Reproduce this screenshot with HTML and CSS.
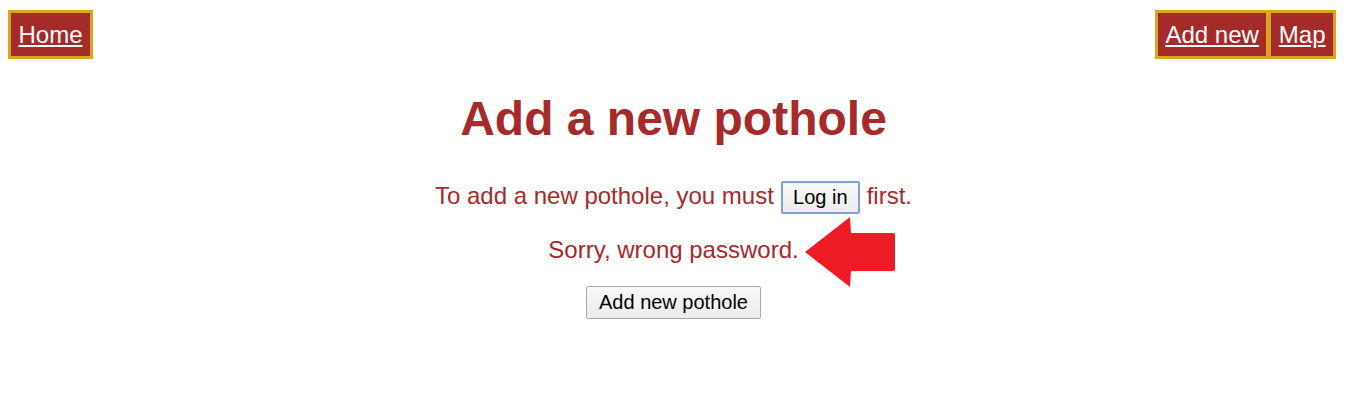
FILE: index.html
```html
<!DOCTYPE html>
<html lang="en">
<head>
<meta charset="utf-8">
<title>Add a new pothole</title>
<link rel="stylesheet" href="styles.css">
</head>
<body>
<nav class="nav">
  <div class="nav-group">
    <a class="nav-link" href="#">Home</a>
  </div>
  <div class="nav-group nav-right">
    <a class="nav-link" href="#">Add new</a>
    <a class="nav-link" href="#">Map</a>
  </div>
</nav>
<main class="content">
  <h1 class="title">Add a new pothole</h1>
  <p class="line">To add a new pothole, you must <button class="btn btn-focus" type="button">Log in</button> first.</p>
  <p class="line"><span class="msg">Sorry, wrong password.<svg class="arrow" width="90" height="70" viewBox="0 0 90 70" aria-hidden="true"><path d="M0 35 L45 0 L46 16 L88 16 Q90 16 90 18 L90 52 Q90 54 88 54 L46 54 L45 70 Z" fill="#ed1c24"/></svg></span></p>
  <div class="actions"><button class="btn" type="button">Add new pothole</button></div>
</main>
</body>
</html>
```
FILE: styles.css
```css
html, body {
  background: #ffffff;
}
body {
  margin: 8px;
  font-family: "Liberation Sans", Arial, sans-serif;
  color: #a52a2a;
}
.nav {
  display: flex;
  justify-content: space-between;
  align-items: flex-start;
  margin-top: 2px;
  margin-right: 3px;
}
.nav-group {
  display: flex;
}
.nav-link {
  display: block;
  background: #a52a2a;
  border: 3px solid #daa520;
  color: #ffffff;
  font-size: 24px;
  line-height: 27px;
  padding: 8px 7.5px;
}
.nav-right .nav-link + .nav-link {
  border-left-width: 2px;
}
.content {
  text-align: center;
}
.title {
  font-size: 48px;
  font-weight: bold;
  margin: 32px 0 32px 0;
  line-height: 55px;
}
.line {
  font-size: 24px;
  margin: 0 0 18px 0;
  line-height: 36px;
}
.msg {
  position: relative;
}
.arrow {
  position: absolute;
  left: calc(100% + 6px);
  top: -19px;
}
.btn {
  font-family: "Liberation Sans", Arial, sans-serif;
  font-size: 20px;
  color: #000000;
  background: linear-gradient(#f8f8f8, #ececec);
  border: 1px solid #a9a9a9;
  border-radius: 2px;
  padding: 4px 12px;
  vertical-align: middle;
}
.btn-focus {
  border-color: #7ba3dc;
  border-width: 2px;
  padding: 3px 10.5px;
}
.actions {
  margin-top: 14px;
}
```
